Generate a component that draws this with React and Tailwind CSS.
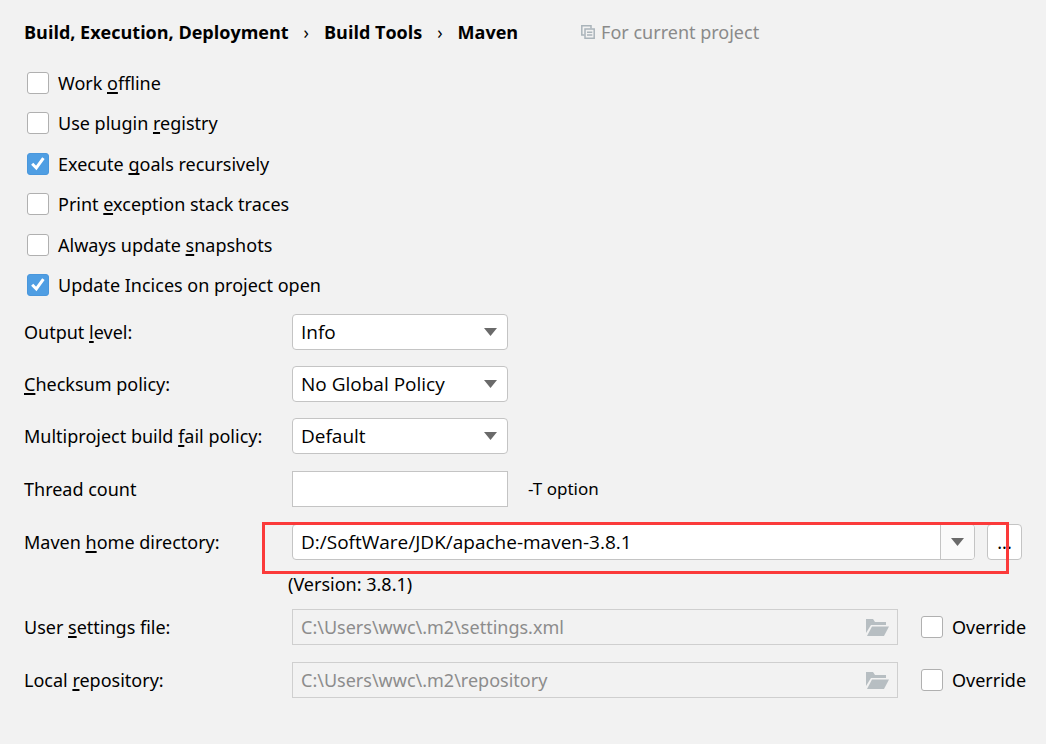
import { useState } from "react";

const OPTIONS = [
  { id: "offline", before: "Work ", key: "o", after: "ffline", checked: false },
  { id: "registry", before: "Use plugin ", key: "r", after: "egistry", checked: false },
  { id: "recursive", before: "Execute ", key: "g", after: "oals recursively", checked: true },
  { id: "traces", before: "Print ", key: "e", after: "xception stack traces", checked: false },
  { id: "snapshots", before: "Always update ", key: "s", after: "napshots", checked: false },
  { id: "indices", before: "Update Incices on project open", key: "", after: "", checked: true },
];

const SELECTS = [
  { id: "output", before: "Output ", key: "l", after: "evel:", values: ["Info", "Debug", "Warn"] },
  { id: "checksum", before: "", key: "C", after: "hecksum policy:", values: ["No Global Policy", "Fail", "Warn"] },
  { id: "fail", before: "Multiproject build ", key: "f", after: "ail policy:", values: ["Default", "Fail Fast", "Fail Never"] },
];

const PATHS = [
  { id: "settings", before: "User ", key: "s", after: "ettings file:", value: "C:\\Users\\wwc\\.m2\\settings.xml" },
  { id: "repository", before: "Local ", key: "r", after: "epository:", value: "C:\\Users\\wwc\\.m2\\repository" },
];

function Mnemonic({ before, letter, after }) {
  return (
    <>
      {before}
      {letter && <u className="underline decoration-2 underline-offset-2 [text-decoration-skip-ink:none]">{letter}</u>}
      {after}
    </>
  );
}

function Checkbox({ id, defaultChecked = false }) {
  const [checked, setChecked] = useState(defaultChecked);

  return (
    <span className="relative block size-[22px] shrink-0">
      <input
        id={id}
        type="checkbox"
        checked={checked}
        onChange={(e) => setChecked(e.target.checked)}
        className="block size-[22px] appearance-none rounded-[3px] border border-[#b0b0b0] bg-white checked:border-[#4a97dc] checked:bg-[#4f9ee3]"
      />
      {checked && (
        <svg viewBox="0 0 22 22" className="pointer-events-none absolute inset-0 size-[22px]" fill="none" stroke="#fff" strokeWidth="3">
          <path d="M5.2 10.8 9.3 15 16.4 5.2" />
        </svg>
      )}
    </span>
  );
}

function Arrow({ className }) {
  return (
    <svg viewBox="0 0 13 8" className={`h-2 w-[13px] ${className || ""}`} fill="#6a6a6a">
      <path d="M0 0H13L6.5 8Z" />
    </svg>
  );
}

function FolderIcon() {
  return (
    <svg viewBox="0 0 23 17" className="h-[17px] w-[23px]" fill="#b7bec2">
      <path d="M0 0H7L9 3H20V6H5L0 14Z" />
      <path d="M6 7.500H23L18 17H1Z" />
    </svg>
  );
}

function CopyIcon() {
  return (
    <svg viewBox="0 0 14 14" className="size-[14px]" fill="none" stroke="#aab4ba" strokeWidth="1.500">
      <path d="M3.500 10H.8V.8H10V3.500" />
      <path d="M4 4H13.200V13.200H4Z" />
      <path d="M6 7.300H11.300M6 10H11.300" />
    </svg>
  );
}

function Row({ id, label, children }) {
  return (
    <div className="flex h-9 items-center">
      <label htmlFor={id} className="w-[268px] shrink-0 whitespace-nowrap">
        {label}
      </label>
      {children}
    </div>
  );
}

export default function App() {
  return (
    <main className="min-h-screen bg-[#f2f2f2] pt-[18px] pr-[19px] pb-6 pl-6 font-['Noto_Sans','Open_Sans',sans-serif] text-[18px] leading-7 text-black">
      <header className="flex items-center whitespace-nowrap">
        <nav className="flex items-center gap-[15px] font-['Open_Sans','Noto_Sans',sans-serif] font-bold">
          <a href="#build">Build, Execution, Deployment</a>
          <span className="font-medium">›</span>
          <a href="#tools">Build Tools</a>
          <span className="font-medium">›</span>
          <a href="#maven">Maven</a>
        </nav>
        <div className="ml-[63px] flex items-center gap-1.5 text-[#8a8a8a]">
          <CopyIcon />
          For current project
        </div>
      </header>

      <div className="mt-[17px] ml-[3px]">
        {OPTIONS.map((o) => (
          <div key={o.id} className="flex h-10 items-center gap-[9px] even:mb-px">
            <Checkbox id={o.id} defaultChecked={o.checked} />
            <label htmlFor={o.id}>
              <Mnemonic before={o.before} letter={o.key} after={o.after} />
            </label>
          </div>
        ))}
      </div>

      <div className="mt-[9px] flex flex-col gap-4">
        {SELECTS.map((s) => (
          <Row key={s.id} id={s.id} label={<Mnemonic before={s.before} letter={s.key} after={s.after} />}>
            <div className="relative w-[216px]">
              <select
                id={s.id}
                className="block h-9 w-full appearance-none rounded-[4px] border border-[#c4c4c4] bg-white px-2 font-['Open_Sans','Noto_Sans',sans-serif] text-[19px]"
              >
                {s.values.map((v) => (
                  <option key={v}>{v}</option>
                ))}
              </select>
              <Arrow className="pointer-events-none absolute top-[14px] right-[11px]" />
            </div>
          </Row>
        ))}
      </div>

      <div className="mt-[17px]">
        <Row id="threads" label="Thread count">
          <input id="threads" type="text" className="h-9 w-[216px] border border-[#c4c4c4] bg-white px-2" />
          <span className="ml-5 text-[17px]">-T option</span>
        </Row>
      </div>

      <div className="mt-[17px]">
        <Row id="home" label={<Mnemonic before="Maven " letter="h" after="ome directory:" />}>
          <div className="relative mr-[5px] flex flex-1 gap-3">
            <div className="flex h-9 flex-1 overflow-hidden rounded-[4px] border border-[#c4c4c4] bg-white">
              <input
                id="home"
                type="text"
                defaultValue="D:/SoftWare/JDK/apache-maven-3.8.1"
                className="min-w-0 flex-1 px-2 font-['Open_Sans','Noto_Sans',sans-serif] text-[19px]"
              />
              <button type="button" aria-label="Show directories" className="flex w-[34px] items-center justify-center border-l border-[#c4c4c4] bg-[#fafafa]">
                <Arrow />
              </button>
            </div>
            <button type="button" className="h-9 w-[35px] rounded-[4px] border border-[#c4c4c4] bg-white">
              ...
            </button>
            {/* Highlight around the home directory */}
            <div className="pointer-events-none absolute -top-0.5 right-[13px] -bottom-[14px] -left-[30px] border-3 border-[#fb3a3a]" />
          </div>
        </Row>
      </div>

      <p className="mt-[10px] ml-[264px]">(Version: 3.8.1)</p>

      <div className="mt-[11px] flex flex-col gap-[17px]">
        {PATHS.map((p) => (
          <Row key={p.id} id={p.id} label={<Mnemonic before={p.before} letter={p.key} after={p.after} />}>
            <div className="flex h-9 flex-1 items-center border border-[#cfcfcf] pr-2">
              <input id={p.id} type="text" disabled defaultValue={p.value} className="min-w-0 flex-1 px-2 text-[#8c8c8c]" />
              <FolderIcon />
            </div>
            <div className="ml-[23px] flex w-[106px] items-center gap-[9px]">
              <Checkbox id={`${p.id}-override`} />
              <label htmlFor={`${p.id}-override`}>Override</label>
            </div>
          </Row>
        ))}
      </div>
    </main>
  );
}
